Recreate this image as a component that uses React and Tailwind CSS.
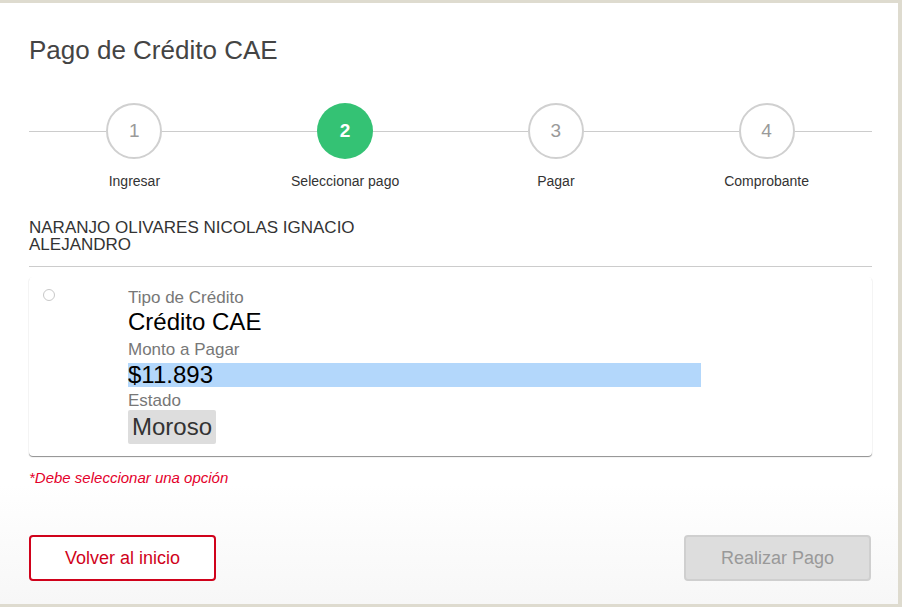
import React from "react";

const steps = [
  { n: 1, label: "Ingresar" },
  { n: 2, label: "Seleccionar pago", active: true },
  { n: 3, label: "Pagar" },
  { n: 4, label: "Comprobante" },
];

const Step = ({ n, label, active }) => (
  <div className="flex flex-col items-center">
    <div className="flex w-full items-center">
      <div className="h-px flex-1 bg-[#cccccc]" />
      <div
        className={
          active
            ? "flex h-[56px] w-[56px] items-center justify-center rounded-full bg-[#34c274] text-[19px] font-bold text-white"
            : "flex h-[56px] w-[56px] items-center justify-center rounded-full border-2 border-[#d0d0d0] bg-white text-[19px] text-[#9a9a9a]"
        }
      >
        {n}
      </div>
      <div className="h-px flex-1 bg-[#cccccc]" />
    </div>
    <div className="mt-[14px] text-[14px] leading-[16px] text-[#333]">{label}</div>
  </div>
);

const App = () => {
  return (
    <div className="h-[607px] w-[902px] bg-[#dedbcf] pt-[3px] pr-[4px] pb-[3px] font-['Liberation_Sans',Arial,sans-serif]">
      <div className="h-full bg-gradient-to-b from-white from-80% to-[#f7f7f7] pt-[32px] pl-[29px] pr-[26px]">
        <h1 className="text-[26px] leading-[30px] text-[#444]">Pago de Crédito CAE</h1>

        {/* Stepper */}
        <div className="mt-[38px] grid grid-cols-4">
          {steps.map((s) => (
            <Step key={s.n} {...s} />
          ))}
        </div>

        <div className="mt-[30px] w-[380px] text-[17px] leading-[17px] text-[#333]">
          NARANJO OLIVARES NICOLAS IGNACIO ALEJANDRO
        </div>

        <div className="mt-[13px] h-px bg-[#cccccc]" />

        {/* Option card */}
        <div className="mt-[10px] flex rounded-[4px] bg-white pt-[11px] pb-[12px] shadow-[0_1px_1px_rgba(0,0,0,0.45)]">
          <div className="w-[99px] shrink-0 pl-[14px] pt-[1px]">
            <div className="h-[12px] w-[12px] rounded-full border border-[#c8c8c8] bg-white" />
          </div>
          <div className="w-[573px]">
            <div className="text-[17px] leading-[19px] text-[#777]">Tipo de Crédito</div>
            <div className="mt-[3px] text-[24px] leading-[24px] text-black">Crédito CAE</div>
            <div className="mt-[6px] text-[17px] leading-[19px] text-[#777]">Monto a Pagar</div>
            <div className="mt-[4px] bg-[#b3d7fb] text-[24px] leading-[24px] text-black">$11.893</div>
            <div className="mt-[4px] text-[17px] leading-[19px] text-[#777]">Estado</div>
            <div className="inline-block rounded-[2px] bg-[#dddddd] px-[4px] py-[5px] text-[24px] leading-[24px] text-[#333]">
              Moroso
            </div>
          </div>
        </div>

        <div className="mt-[13px] text-[15px] italic leading-[18px] text-[#e4002b]">
          *Debe seleccionar una opción
        </div>

        <div className="mt-[48px] flex items-center justify-between pr-[1px]">
          <button className="h-[46px] w-[187px] rounded-[4px] border-2 border-[#d0021b] bg-white text-[18px] text-[#d0021b]">
            Volver al inicio
          </button>
          <button className="h-[46px] w-[187px] rounded-[4px] border-2 border-[#cfcfcf] bg-[#dddddd] text-[18px] text-[#999]">
            Realizar Pago
          </button>
        </div>
      </div>
    </div>
  );
};

export default App;
